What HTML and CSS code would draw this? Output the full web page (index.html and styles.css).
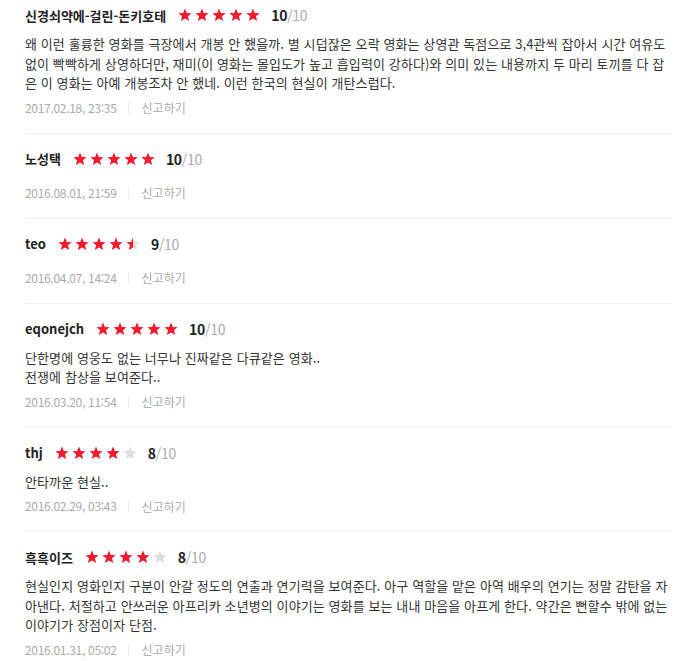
FILE: index.html
```html
<!DOCTYPE html>
<html lang="ko">
<head>
	<meta charset="UTF-8">
	<title>평점 리스트</title>
	<link rel="stylesheet" href="styles.css">
</head>
<body>
	<svg width="0" height="0" class="defs">
		<defs>
			<symbol id="star" viewBox="0 0 24 24"><polygon points="12,0.8 15.1,8.4 23.4,8.8 17,14 19.2,22.4 12,17.8 4.8,22.4 7,14 0.6,8.8 8.9,8.4"/></symbol>
			<linearGradient id="half"><stop offset="50%" stop-color="#f21a2f"/><stop offset="50%" stop-color="#ddd"/></linearGradient>
		</defs>
	</svg>
	<ul class="reviews">
		<li class="review">
			<div class="head">
				<strong class="name">신경쇠약에-걸린-돈키호테</strong>
				<span class="stars"><svg><use href="#star"/></svg><svg><use href="#star"/></svg><svg><use href="#star"/></svg><svg><use href="#star"/></svg><svg><use href="#star"/></svg></span>
				<span class="score"><b>10</b>/10</span>
			</div>
			<p class="text">왜 이런 훌륭한 영화를 극장에서 개봉 안 했을까. 별 시덥잖은 오락 영화는 상영관 독점으로 3,4관씩 잡아서 시간 여유도<br>없이 빡빡하게 상영하더만, 재미(이 영화는 몰입도가 높고 흡입력이 강하다)와 의미 있는 내용까지 두 마리 토끼를 다 잡<br>은 이 영화는 아예 개봉조차 안 했네. 이런 한국의 현실이 개탄스럽다.</p>
			<div class="meta"><span class="date">2017.02.18, 23:35</span><a class="report">신고하기</a></div>
		</li>
		<li class="review">
			<div class="head">
				<strong class="name">노성택</strong>
				<span class="stars"><svg><use href="#star"/></svg><svg><use href="#star"/></svg><svg><use href="#star"/></svg><svg><use href="#star"/></svg><svg><use href="#star"/></svg></span>
				<span class="score"><b>10</b>/10</span>
			</div>
			<div class="meta"><span class="date">2016.08.01, 21:59</span><a class="report">신고하기</a></div>
		</li>
		<li class="review">
			<div class="head">
				<strong class="name">teo</strong>
				<span class="stars"><svg><use href="#star"/></svg><svg><use href="#star"/></svg><svg><use href="#star"/></svg><svg><use href="#star"/></svg><svg class="half"><use href="#star"/></svg></span>
				<span class="score"><b>9</b>/10</span>
			</div>
			<div class="meta"><span class="date">2016.04.07, 14:24</span><a class="report">신고하기</a></div>
		</li>
		<li class="review">
			<div class="head">
				<strong class="name">eqonejch</strong>
				<span class="stars"><svg><use href="#star"/></svg><svg><use href="#star"/></svg><svg><use href="#star"/></svg><svg><use href="#star"/></svg><svg><use href="#star"/></svg></span>
				<span class="score"><b>10</b>/10</span>
			</div>
			<p class="text">단한명에 영웅도 없는 너무나 진짜같은 다큐같은 영화..<br>전쟁에 참상을 보여준다..</p>
			<div class="meta"><span class="date">2016.03.20, 11:54</span><a class="report">신고하기</a></div>
		</li>
		<li class="review">
			<div class="head">
				<strong class="name">thj</strong>
				<span class="stars"><svg><use href="#star"/></svg><svg><use href="#star"/></svg><svg><use href="#star"/></svg><svg><use href="#star"/></svg><svg class="off"><use href="#star"/></svg></span>
				<span class="score"><b>8</b>/10</span>
			</div>
			<p class="text">안타까운 현실..</p>
			<div class="meta"><span class="date">2016.02.29, 03:43</span><a class="report">신고하기</a></div>
		</li>
		<li class="review">
			<div class="head">
				<strong class="name">흑흑이즈</strong>
				<span class="stars"><svg><use href="#star"/></svg><svg><use href="#star"/></svg><svg><use href="#star"/></svg><svg><use href="#star"/></svg><svg class="off"><use href="#star"/></svg></span>
				<span class="score"><b>8</b>/10</span>
			</div>
			<p class="text">현실인지 영화인지 구분이 안갈 정도의 연출과 연기력을 보여준다. 아구 역할을 맡은 아역 배우의 연기는 정말 감탄을 자<br>아낸다. 처절하고 안쓰러운 아프리카 소년병의 이야기는 영화를 보는 내내 마음을 아프게 한다. 약간은 뻔할수 밖에 없는<br>이야기가 장점이자 단점.</p>
			<div class="meta"><span class="date">2016.01.31, 05:02</span><a class="report">신고하기</a></div>
		</li>
	</ul>
</body>
</html>
```

FILE: styles.css
```css
* {
	margin: 0;
	padding: 0;
}
body {
	background: #fff;
	font-family: "Noto Sans CJK KR", "Noto Sans", sans-serif;
	color: #333;
}
.defs {
	position: absolute;
}
.reviews {
	list-style: none;
	width: 648px;
	margin-left: 25px;
}
.review {
	padding: 14px 0 15px;
	border-bottom: 1px solid #f0f0f0;
}
.review:first-child {
	padding-top: 4px;
}
.head {
	display: flex;
	align-items: center;
	height: 22px;
}
.name {
	font-size: 13px;
	font-weight: bold;
	color: #222;
	margin-right: 12px;
}
.stars {
	display: flex;
	gap: 3px;
	margin-right: 11px;
}
.stars svg {
	width: 14px;
	height: 14px;
	fill: #f21a2f;
}
.stars svg.off {
	fill: #ddd;
}
.stars svg.half {
	fill: url(#half);
}
.score {
	font-size: 14px;
	color: #aaa;
	letter-spacing: -0.3px;
}
.score b {
	color: #222;
}
.text {
	margin-top: 8px;
	font-size: 13px;
	line-height: 19.5px;
	color: #333;
	letter-spacing: 0.1px;
	white-space: nowrap;
}
.meta {
	display: flex;
	align-items: center;
	margin-top: 13px;
	height: 20px;
	font-size: 12px;
	color: #aaa;
}
.text + .meta {
	margin-top: 5px;
}
.date {
	letter-spacing: -0.3px;
	padding-right: 11px;
	border-right: 1px solid #eee;
	line-height: 12px;
}
.report {
	padding-left: 13px;
	cursor: pointer;
}
```
